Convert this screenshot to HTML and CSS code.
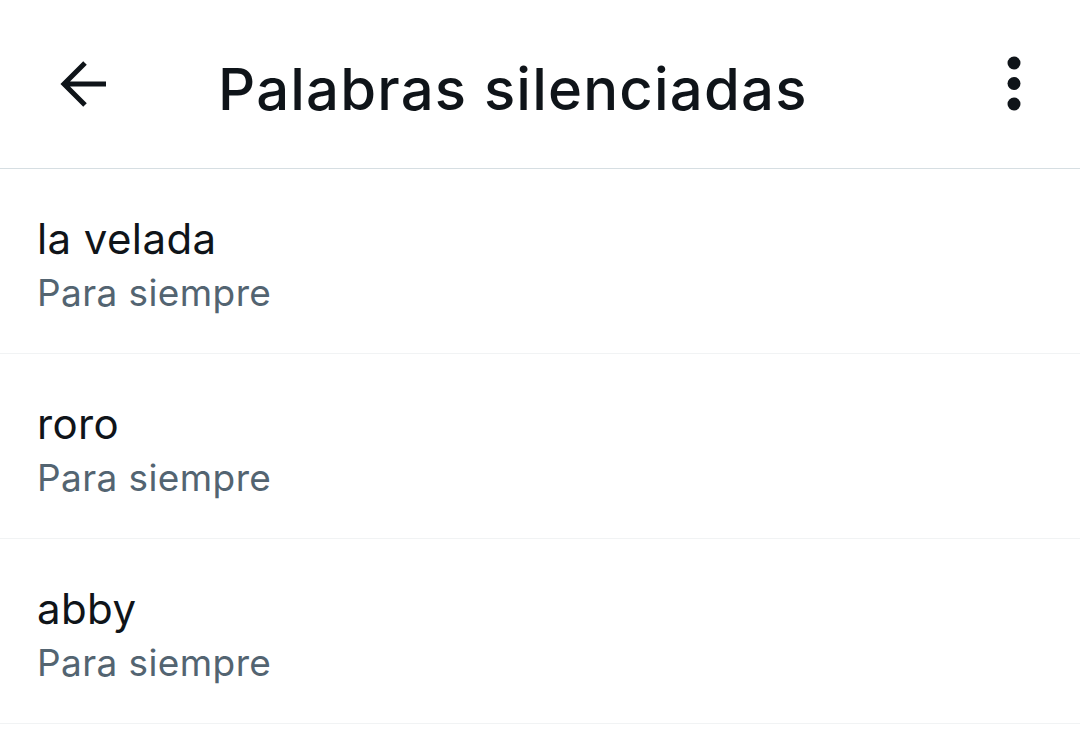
FILE: index.html
```html
<!DOCTYPE html>
<html lang="es">

<head>
    <meta charset="UTF-8">
    <meta name="viewport" content="width=device-width, initial-scale=1.0">
    <title>Palabras silenciadas</title>
    <link rel="stylesheet" href="styles.css">
</head>

<body>
    <div class="screen">
        <header class="topbar">
            <button class="icon-btn back-btn" aria-label="Atrás">
                <svg width="56" height="56" viewBox="0 0 56 56">
                    <path d="M50 28H9M29 7L8 28l21 21" fill="none" stroke="#0f1419" stroke-width="5"/>
                </svg>
            </button>
            <h1 class="topbar-title">Palabras silenciadas</h1>
            <button class="icon-btn more-btn" aria-label="Más opciones">
                <svg width="20" height="60" viewBox="0 0 20 60">
                    <circle cx="10" cy="9" r="6.5" fill="#0f1419"/>
                    <circle cx="10" cy="29.5" r="6.5" fill="#0f1419"/>
                    <circle cx="10" cy="50" r="6.5" fill="#0f1419"/>
                </svg>
            </button>
        </header>

        <ul class="word-list">
            <li class="word-item">
                <span class="word">la velada</span>
                <span class="duration">Para siempre</span>
            </li>
            <li class="word-item">
                <span class="word">roro</span>
                <span class="duration">Para siempre</span>
            </li>
            <li class="word-item">
                <span class="word">abby</span>
                <span class="duration">Para siempre</span>
            </li>
        </ul>
    </div>
</body>

</html>
```

FILE: styles.css
```css
* {
    box-sizing: border-box;
    margin: 0;
    padding: 0;
}

body {
    font-family: Inter, Roboto, 'Noto Sans', sans-serif;
    background-color: #ffffff;
    color: #0f1419;
}

.screen {
    width: 1080px;
    height: 753px;
    overflow: hidden;
}

.topbar {
    display: flex;
    align-items: center;
    height: 169px;
    border-bottom: 1px solid #d6dee2;
}

.icon-btn {
    background: none;
    border: none;
    display: flex;
    align-items: center;
    justify-content: center;
}

.back-btn {
    margin-left: 56px;
}

.topbar-title {
    flex: 1;
    margin-left: 106px;
    margin-top: 10px;
    font-size: 58px;
    line-height: 68px;
    font-weight: 500;
    letter-spacing: 1.2px;
}

.more-btn {
    margin-right: 56px;
}

.word-list {
    list-style: none;
}

.word-item {
    display: flex;
    flex-direction: column;
    height: 185px;
    padding: 43px 0 0 37px;
    border-bottom: 1px solid #f1f3f4;
}

.word {
    font-size: 42px;
    line-height: 54px;
    letter-spacing: 0.4px;
}

.duration {
    font-size: 37px;
    line-height: 54px;
    letter-spacing: 0.4px;
    color: #536471;
}
```
